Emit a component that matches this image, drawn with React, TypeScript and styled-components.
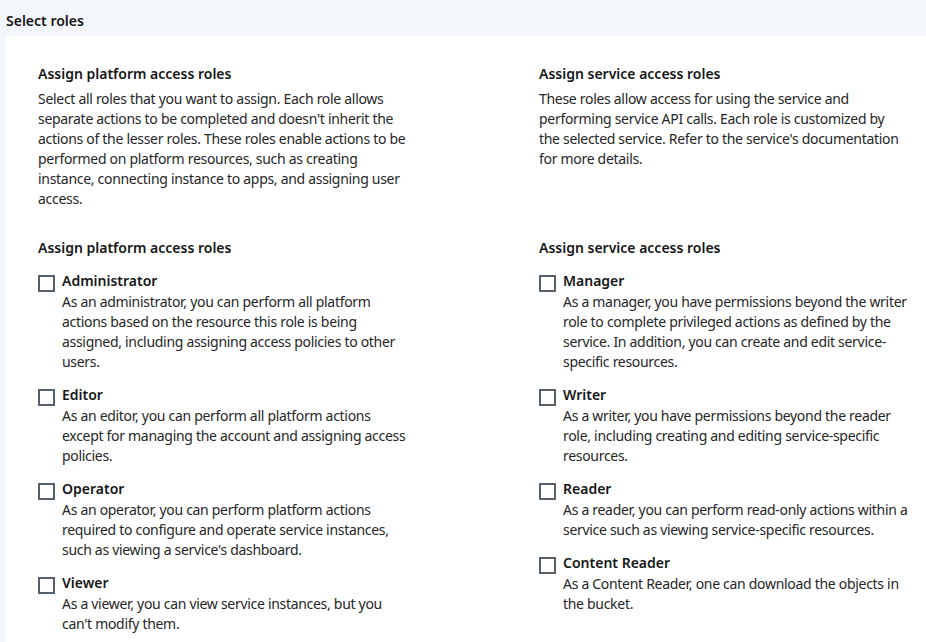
import React from "react";
import styled, { createGlobalStyle } from "styled-components";

const Global = createGlobalStyle`
  html, body { margin: 0; padding: 0; }
  body {
    background: #f3f6fb;
    font-family: "Noto Sans", "Open Sans", Arial, sans-serif;
    color: #161616;
    -webkit-font-smoothing: antialiased;
  }
`;

const Page = styled.div`
  padding-left: 6px;
  min-height: 642px;
  display: flex;
  flex-direction: column;
`;

const TitleBar = styled.div`
  height: 36px;
  display: flex;
  align-items: center;
  font-size: 14px;
  font-weight: 600;
  color: #161616;
  padding-top: 4px;
  box-sizing: border-box;
`;

const Panel = styled.div`
  flex: 1;
  background: #ffffff;
  padding: 28px 16px 24px 32px;
`;

const Grid = styled.div`
  display: grid;
  grid-template-columns: 501px 1fr;
  row-gap: 29px;
`;

const Section = styled.section`
  display: flex;
  flex-direction: column;
`;

const Heading = styled.h3`
  margin: 0;
  font-size: 14px;
  line-height: 20px;
  font-weight: 600;
  color: #161616;
`;

const Description = styled.p<{ $width?: number }>`
  margin: 5px 0 0;
  font-size: 14px;
  line-height: 20px;
  letter-spacing: -0.3px;
  color: #262626;
  max-width: ${(p) => p.$width ?? 375}px;
`;

const List = styled.div`
  display: flex;
  flex-direction: column;
  gap: 13px;
  margin-top: 13px;
`;

const Item = styled.label`
  display: grid;
  grid-template-columns: 17px 1fr;
  column-gap: 7px;
  cursor: pointer;
`;

const Box = styled.span`
  width: 17px;
  height: 17px;
  box-sizing: border-box;
  border: 2px solid #58616b;
  margin-top: 4px;
  background: #fff;
`;

const HiddenInput = styled.input`
  position: absolute;
  opacity: 0;
  width: 0;
  height: 0;
`;

const ItemBody = styled.div`
  display: flex;
  flex-direction: column;
`;

const ItemLabel = styled.span`
  font-size: 14px;
  line-height: 20px;
  font-weight: 600;
  color: #161616;
`;

const ItemText = styled.span`
  margin-top: 1px;
  font-size: 14px;
  line-height: 20px;
  letter-spacing: -0.3px;
  color: #262626;
  max-width: 350px;
`;

type Role = { name: string; text: string };

const platformRoles: Role[] = [
  {
    name: "Administrator",
    text: "As an administrator, you can perform all platform actions based on the resource this role is being assigned, including assigning access policies to other users.",
  },
  {
    name: "Editor",
    text: "As an editor, you can perform all platform actions except for managing the account and assigning access policies.",
  },
  {
    name: "Operator",
    text: "As an operator, you can perform platform actions required to configure and operate service instances, such as viewing a service's dashboard.",
  },
  {
    name: "Viewer",
    text: "As a viewer, you can view service instances, but you can't modify them.",
  },
];

const serviceRoles: Role[] = [
  {
    name: "Manager",
    text: "As a manager, you have permissions beyond the writer role to complete privileged actions as defined by the service. In addition, you can create and edit service-specific resources.",
  },
  {
    name: "Writer",
    text: "As a writer, you have permissions beyond the reader role, including creating and editing service-specific resources.",
  },
  {
    name: "Reader",
    text: "As a reader, you can perform read-only actions within a service such as viewing service-specific resources.",
  },
  {
    name: "Content Reader",
    text: "As a Content Reader, one can download the objects in the bucket.",
  },
];

const RoleList = ({ roles }: { roles: Role[] }) => (
  <List>
    {roles.map((r) => (
      <Item key={r.name}>
        <HiddenInput type="checkbox" />
        <Box />
        <ItemBody>
          <ItemLabel>{r.name}</ItemLabel>
          <ItemText>{r.text}</ItemText>
        </ItemBody>
      </Item>
    ))}
  </List>
);

export default function App() {
  return (
    <>
      <Global />
      <Page>
        <TitleBar>Select roles</TitleBar>
        <Panel>
          <Grid>
            <Section>
              <Heading>Assign platform access roles</Heading>
              <Description>
                Select all roles that you want to assign. Each role allows separate actions to be
                completed and doesn't inherit the actions of the lesser roles. These roles enable
                actions to be performed on platform resources, such as creating instance, connecting
                instance to apps, and assigning user access.
              </Description>
            </Section>
            <Section>
              <Heading>Assign service access roles</Heading>
              <Description $width={366}>
                These roles allow access for using the service and performing service API calls.
                Each role is customized by the selected service. Refer to the service's documentation
                for more details.
              </Description>
            </Section>
            <Section>
              <Heading>Assign platform access roles</Heading>
              <RoleList roles={platformRoles} />
            </Section>
            <Section>
              <Heading>Assign service access roles</Heading>
              <RoleList roles={serviceRoles} />
            </Section>
          </Grid>
        </Panel>
      </Page>
    </>
  );
}
